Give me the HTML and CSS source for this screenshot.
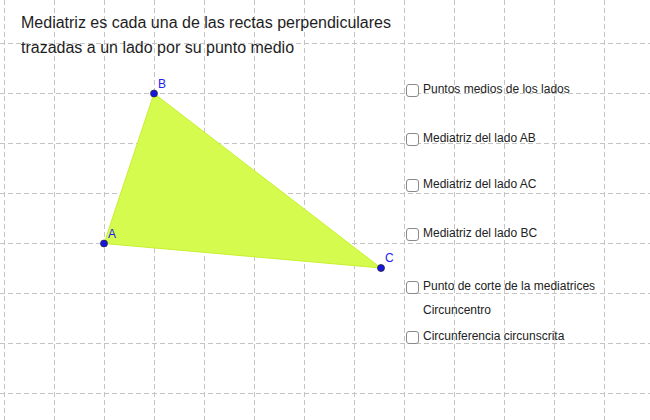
FILE: index.html
```html
<!DOCTYPE html>
<html lang="es">
<head>
<meta charset="utf-8">
<title>Mediatriz</title>
<link rel="stylesheet" href="styles.css">
</head>
<body>
<div class="applet">
  <svg class="canvas" width="650" height="420" viewBox="0 0 650 420" xmlns="http://www.w3.org/2000/svg">
    <g class="grid">
      <line x1="4.5" y1="0" x2="4.5" y2="420"/>
      <line x1="54.5" y1="0" x2="54.5" y2="420"/>
      <line x1="104.5" y1="0" x2="104.5" y2="420"/>
      <line x1="154.5" y1="0" x2="154.5" y2="420"/>
      <line x1="204.5" y1="0" x2="204.5" y2="420"/>
      <line x1="254.5" y1="0" x2="254.5" y2="420"/>
      <line x1="304.5" y1="0" x2="304.5" y2="420"/>
      <line x1="354.5" y1="0" x2="354.5" y2="420"/>
      <line x1="404.5" y1="0" x2="404.5" y2="420"/>
      <line x1="454.5" y1="0" x2="454.5" y2="420"/>
      <line x1="504.5" y1="0" x2="504.5" y2="420"/>
      <line x1="554.5" y1="0" x2="554.5" y2="420"/>
      <line x1="604.5" y1="0" x2="604.5" y2="420"/>
      <line x1="0" y1="43.5" x2="650" y2="43.5"/>
      <line x1="0" y1="93.5" x2="650" y2="93.5"/>
      <line x1="0" y1="143.5" x2="650" y2="143.5"/>
      <line x1="0" y1="193.5" x2="650" y2="193.5"/>
      <line x1="0" y1="243.5" x2="650" y2="243.5"/>
      <line x1="0" y1="293.5" x2="650" y2="293.5"/>
      <line x1="0" y1="343.5" x2="650" y2="343.5"/>
      <line x1="0" y1="393.5" x2="650" y2="393.5"/>
    </g>
    <polygon class="tri" points="104,243.5 154,93.5 381,268"/>
    <circle class="pt" cx="104" cy="243.5" r="3.5"/>
    <circle class="pt" cx="154" cy="93.5" r="3.5"/>
    <circle class="pt" cx="381" cy="268" r="3.5"/>
    <text class="lbl" x="108" y="238">A</text>
    <text class="lbl" x="158" y="88">B</text>
    <text class="lbl" x="385" y="262">C</text>
  </svg>

  <div class="title">
    <p>Mediatriz es cada una de las rectas perpendiculares</p>
    <p>trazadas a un lado por su punto medio</p>
  </div>

  <div class="cb r1"><span class="box"></span><span class="txt">Puntos medios de los lados</span></div>
  <div class="cb r2"><span class="box"></span><span class="txt">Mediatriz del lado AB</span></div>
  <div class="cb r3"><span class="box"></span><span class="txt">Mediatriz del lado AC</span></div>
  <div class="cb r4"><span class="box"></span><span class="txt">Mediatriz del lado BC</span></div>
  <div class="cb r5"><span class="box"></span><span class="txt">Punto de corte de la mediatrices</span></div>
  <div class="note">Circuncentro</div>
  <div class="cb r6"><span class="box"></span><span class="txt">Circunferencia circunscrita</span></div>
</div>
</body>
</html>
```

FILE: styles.css
```css
html, body {
  margin: 0;
  padding: 0;
  background: #ffffff;
}

.applet {
  position: relative;
  width: 650px;
  height: 420px;
  overflow: hidden;
  font-family: "Liberation Sans", Arial, sans-serif;
  color: #222222;
}

.canvas {
  position: absolute;
  left: 0;
  top: 0;
}

.grid line {
  stroke: #c4c4c4;
  stroke-width: 1;
  stroke-dasharray: 5 3;
}

.tri {
  fill: #d6fb4f;
  stroke: #c8f02e;
  stroke-width: 1;
}

.pt {
  fill: #1616e0;
  stroke: #2a2a3a;
  stroke-width: 0.8;
}

.lbl {
  font-family: "Liberation Sans", Arial, sans-serif;
  font-size: 12px;
  fill: #2222ee;
}

.title {
  position: relative;
  padding: 10px 0 0 21px;
  font-size: 16px;
  line-height: 25px;
  color: #1e1e1e;
}

.title p {
  margin: 0;
}

.cb {
  position: absolute;
  left: 406px;
  display: flex;
  align-items: center;
  gap: 4px;
  font-size: 12px;
  line-height: 13px;
}

.box {
  box-sizing: border-box;
  width: 13px;
  height: 13px;
  border: 1.5px solid #8a8a8a;
  border-radius: 3px;
  background: #ffffff;
}

.txt {
  position: relative;
  top: -1px;
  white-space: nowrap;
}

.r1 { top: 84px; }
.r2 { top: 133px; }
.r3 { top: 179px; }
.r4 { top: 228px; }
.r5 { top: 281px; }
.r6 { top: 331px; }

.note {
  position: absolute;
  left: 423px;
  top: 304px;
  font-size: 12px;
  line-height: 13px;
  white-space: nowrap;
}
```
